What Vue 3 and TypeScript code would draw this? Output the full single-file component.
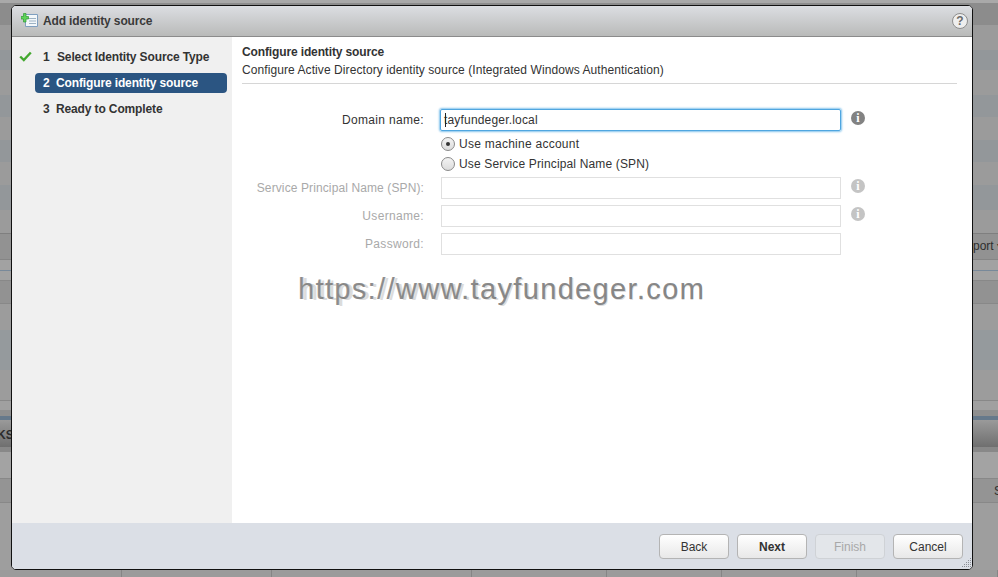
<script setup lang="ts">
interface Step { n: number; label: string; done?: boolean; active?: boolean }
const steps: Step[] = [
  { n: 1, label: 'Select Identity Source Type', done: true },
  { n: 2, label: 'Configure identity source', active: true },
  { n: 3, label: 'Ready to Complete' },
]
const bands = [
  { h: 3, c: '#a9a9a9' }, { h: 22, c: '#8c8c8c' }, { h: 25, c: '#9b9b9b' }, { h: 20, c: '#93979a' },
  { h: 25, c: '#9b9b9b' }, { h: 22, c: '#93979a' }, { h: 23, c: '#9b9b9b' }, { h: 22, c: '#93979a' },
  { h: 23, c: '#9b9b9b' }, { h: 25, c: '#93979a' }, { h: 23, c: '#9b9b9b' }, { h: 1, c: '#7f7f7f' },
  { h: 25, c: '#929292' }, { h: 1, c: '#858585' }, { h: 10, c: '#a2a2a2' }, { h: 1, c: '#78899a' },
  { h: 9, c: '#a2a2a2' }, { h: 1, c: '#888888' }, { h: 22, c: '#929292' }, { h: 1, c: '#888888' },
  { h: 26, c: '#9c9c9c' }, { h: 40, c: '#959a9d' }, { h: 30, c: '#9c9c9c' }, { h: 1, c: '#888888' },
  { h: 9, c: '#a0a0a0' }, { h: 6, c: '#8f8f8f' }, { h: 4, c: '#66798b' },
  { h: 27, c: 'linear-gradient(#9a9a9a, #6f6f6f)' }, { h: 5, c: '#888888' }, { h: 26, c: '#a3a3a3' },
  { h: 1, c: '#888888' }, { h: 23, c: '#949494' }, { h: 1, c: '#888888' }, { h: 67, c: '#9e9e9e' },
]
const columns = [122, 150, 200, 135, 115, 135, 141]
const watermark = 'https://www.tayfundeger.com'
</script>

<template>
  <div class="page">
    <div class="backdrop">
      <div v-for="(b, i) in bands" :key="i" :style="{ height: b.h + 'px', background: b.c }"></div>
      <div class="cols">
        <div v-for="(w, i) in columns" :key="i" class="col" :style="{ width: w + 'px' }"></div>
      </div>
    </div>
    <span class="bg-text bg-port">port ▾</span>
    <span class="bg-text bg-ks">KS</span>
    <span class="bg-text bg-s">S</span>

    <section class="dialog">
      <header class="head">
        <svg class="head-icon" width="18" height="16" viewBox="0 0 18 16">
          <path d="M4.500 1.500h12v12h-12z" fill="#f3f7fa" stroke="#7f9fc0" />
          <path d="M8 5.500h7M8 8h7M8 10.500h7" stroke="#9db2c4" />
          <path d="M2.500 .5h2.500v3h2.500v2.500H5v3H2.500V6H0V3.500h2.500z" fill="#5fd35a" stroke="#2f9a35" stroke-width=".7" />
        </svg>
        <h1>Add identity source</h1>
        <span class="help">?</span>
      </header>
      <div class="body">
        <nav class="side">
          <div v-for="s in steps" :key="s.n" class="step" :class="{ active: s.active }">
            <svg v-if="s.done" class="check" width="13" height="11" viewBox="0 0 13 11">
              <path d="M1.200 5.500 4.800 9 11.800 1.500" fill="none" stroke="#43a82f" stroke-width="2.400" />
            </svg>
            <span class="num" :class="{ wide: s.done }">{{ s.n }}</span>
            <span>{{ s.label }}</span>
          </div>
        </nav>
        <main class="content">
          <h2>Configure identity source</h2>
          <p class="sub">Configure Active Directory identity source (Integrated Windows Authentication)</p>
          <div class="rule"></div>
          <form class="form" @submit.prevent>
            <label class="lab wide-text">Domain name:</label>
            <div class="focus-input"><i class="caret"></i>tayfundeger.local</div>
            <span class="info">i</span>

            <div class="radios">
              <div class="radio-row t1"><span class="radio on"></span>Use machine account</div>
              <div class="radio-row t2"><span class="radio"></span>Use Service Principal Name (SPN)</div>
            </div>

            <label class="lab off spn">Service Principal Name (SPN):</label>
            <div class="dis"></div>
            <span class="info faint">i</span>

            <label class="lab off wide-text">Username:</label>
            <div class="dis"></div>
            <span class="info faint">i</span>

            <label class="lab off wide-text">Password:</label>
            <div class="dis"></div>
          </form>
          <div class="mark" aria-hidden="true">
            <span class="m3">{{ watermark }}</span>
            <span class="m2">{{ watermark }}</span>
            <span class="m1">{{ watermark }}</span>
          </div>
        </main>
      </div>
      <footer class="foot">
        <button type="button" class="btn">Back</button>
        <button type="button" class="btn strong">Next</button>
        <button type="button" class="btn disabled">Finish</button>
        <button type="button" class="btn">Cancel</button>
        <svg class="grip" width="11" height="12" viewBox="0 0 11 12">
          <path d="M9 1h1v1H9zM7 3h1v1H7zM9 3h1v1H9zM5 5h1v1H5zM7 5h1v1H7zM9 5h1v1H9zM3 7h1v1H3zM5 7h1v1H5zM7 7h1v1H7zM9 7h1v1H9zM1 9h1v1H1zM3 9h1v1H3zM5 9h1v1H5zM7 9h1v1H7zM9 9h1v1H9z" fill="#8c9096" />
        </svg>
      </footer>
    </section>
  </div>
</template>

<style>
html, body { margin: 0; background: #9c9c9c; }
</style>

<style scoped>
.page {
  position: relative;
  width: 998px;
  height: 577px;
  overflow: hidden;
  font-family: "Liberation Sans", Arial, sans-serif;
  font-size: 12px;
  color: #333;
}
.cols { display: flex; height: 8px; background: #9b9b9b; }
.col { box-sizing: border-box; border-right: 1px solid #858585; flex: none; }
.bg-text { position: absolute; color: #2e2e2e; font-size: 12px; }
.bg-port { left: 973px; top: 239px; white-space: nowrap; }
.bg-ks { left: -3px; top: 428px; font-weight: bold; color: #2c2c2c; }
.bg-s { left: 994px; top: 484px; }

.dialog {
  position: absolute;
  left: 11px;
  top: 5px;
  width: 960px;
  height: 563px;
  border: 1px solid #111;
  border-radius: 5px;
  display: flex;
  flex-direction: column;
  overflow: hidden;
  background: #fff;
}
.head {
  height: 30px;
  flex: none;
  display: flex;
  align-items: center;
  padding-left: 9px;
  border-bottom: 1px solid #8b8b8b;
  background: linear-gradient(#dcdee2, #b9bab9);
}
.head-icon { flex: none; }
.head h1 {
  margin: 0 0 0 4px;
  font-size: 12px;
  font-weight: bold;
  letter-spacing: -.14px;
  color: #3a3a3a;
  flex: 1;
}
.help {
  width: 14px;
  height: 14px;
  margin-right: 4px;
  border: 1px solid #8d8d8d;
  border-radius: 50%;
  background: #eeeeee;
  color: #6a6a6a;
  font-size: 12px;
  font-weight: bold;
  line-height: 14px;
  text-align: center;
}
.body { flex: 1; display: flex; min-height: 0; }
.side {
  width: 220px;
  flex: none;
  padding-top: 10px;
  box-sizing: border-box;
  background: #f0f0f0;
}
.step {
  height: 20px;
  margin: 0 5px 6px 23px;
  padding-left: 8px;
  display: flex;
  align-items: center;
  position: relative;
  font-weight: bold;
  letter-spacing: -.13px;
  color: #333;
  border-radius: 4px;
}
.step.active { background: #2b5582; color: #fff; }
.check { position: absolute; left: -16px; top: 4px; }
.num { width: 13px; flex: none; }
.num.wide { width: 14px; }
.content { flex: 1; position: relative; padding: 8px 15px 0 10px; min-width: 0; }
.content h2 { margin: 0; font-size: 12px; line-height: 14px; font-weight: bold; letter-spacing: -.13px; color: #333; }
.sub { margin: 4px 0 0; line-height: 14px; letter-spacing: .08px; color: #333; }
.rule { height: 1px; margin-top: 6px; background: #d6d6d6; }
.form {
  display: grid;
  grid-template-columns: 182px 400px 24px;
  column-gap: 17px;
  row-gap: 6px;
  grid-template-rows: 24px 33px 22px 22px 22px;
  margin-top: 24px;
  align-items: center;
}
.lab { text-align: right; color: #333; white-space: nowrap; justify-self: end; }
.lab.off { color: #a9a9a9; }
.wide-text { letter-spacing: .33px; }
.spn { letter-spacing: .11px; }
.focus-input {
  height: 22px;
  margin-left: -1px;
  width: 401px;
  box-sizing: border-box;
  border: 1px solid #4fa6e0;
  box-shadow: 0 0 2px 1px #86c4ec;
  border-radius: 2px;
  line-height: 20px;
  padding-left: 3px;
  letter-spacing: .18px;
  color: #333;
  position: relative;
}
.caret { position: absolute; left: 4px; top: 3px; width: 1px; height: 14px; background: #222; }
.info {
  width: 14px;
  height: 14px;
  margin: -5px 0 0 -7px;
  border-radius: 50%;
  background: #828282;
  color: #fff;
  font-family: "Liberation Serif", serif;
  font-weight: bold;
  font-size: 12px;
  line-height: 14px;
  text-align: center;
}
.info.faint { background: #c4c4c4; }
.radios {
  grid-column: 2 / 4;
  display: flex;
  flex-direction: column;
  gap: 6px;
  align-self: start;
  margin-top: -1px;
}
.radio-row { height: 14px; line-height: 14px; display: flex; align-items: center; color: #333; }
.t1 { letter-spacing: .26px; }
.t2 { letter-spacing: .15px; }
.radio {
  width: 12px;
  height: 12px;
  margin-right: 4px;
  border: 1px solid #8a8a8a;
  border-radius: 50%;
  background: linear-gradient(#f3f3f3, #dcdcdc);
  position: relative;
}
.radio.on::after {
  content: "";
  position: absolute;
  left: 4px;
  top: 4px;
  width: 4px;
  height: 4px;
  border-radius: 50%;
  background: #333;
}
.dis { height: 20px; border: 1px solid #e0e0e0; background: #fff; }
.mark { position: absolute; left: 66px; top: 235px; width: 430px; height: 36px; pointer-events: none; }
.mark span {
  position: absolute;
  font-size: 29px;
  line-height: 34px;
  white-space: nowrap;
  font-weight: normal;
}
.m1 { left: 0; top: 0; letter-spacing: 1.35px; color: rgba(115, 115, 115, .75); }
.m2 { left: 1px; top: 0; letter-spacing: 1.3px; color: rgba(165, 165, 165, .55); }
.m3 { left: 4px; top: 1px; letter-spacing: 1.2px; color: rgba(185, 185, 185, .5); }
.foot {
  height: 46px;
  flex: none;
  position: relative;
  display: flex;
  justify-content: flex-end;
  align-items: flex-start;
  gap: 8px;
  padding: 11px 9px 0 0;
  box-sizing: border-box;
  background: #dbdfe6;
}
.btn {
  width: 70px;
  height: 25px;
  padding: 0;
  border: 1px solid #b4b4b4;
  border-radius: 4px;
  background: linear-gradient(#ffffff, #e8e8e8);
  font: 12px "Liberation Sans", Arial, sans-serif;
  color: #333;
}
.btn.strong { font-weight: bold; }
.btn.disabled { color: #a8a8a8; background: #e3e6ea; border-color: #cfd2d6; }
.grip { position: absolute; right: 0; bottom: 0; }
</style>
